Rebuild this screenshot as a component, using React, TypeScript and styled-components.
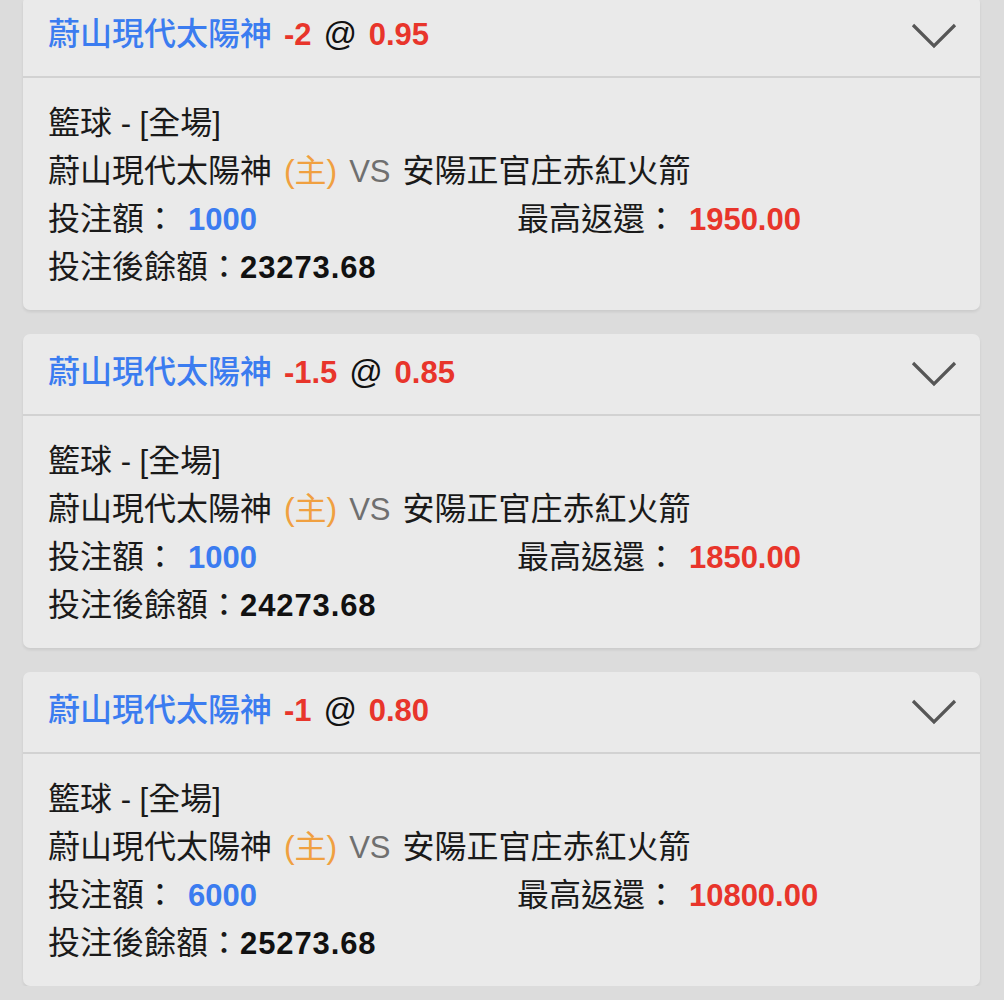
import React from 'react'
import styled, { createGlobalStyle } from 'styled-components'

const GlobalStyle = createGlobalStyle`
  html, body {
    margin: 0;
    padding: 0;
    background: #dcdcdc;
  }
  body {
    font-family: "Liberation Sans", "Noto Sans CJK TC", sans-serif;
    color: #1a1a1a;
  }
`

const StyledList = styled.div`
  display: flex;
  flex-direction: column;
  gap: 24px;
  padding: 0 24px 0 23px;
  margin-top: -4px;
`

const StyledCard = styled.div`
  background: #eaeaea;
  border-radius: 7px;
  box-shadow: 0 2px 3px rgba(0, 0, 0, 0.08);
  overflow: hidden;
`

const StyledHeader = styled.div`
  height: 80px;
  display: flex;
  align-items: center;
  justify-content: space-between;
  padding: 0 23px 0 25px;
  border-bottom: 2px solid #d2d2d2;
`

const StyledTitle = styled.div`
  font-size: 32px;
  line-height: 40px;
  height: 40px;
  font-weight: 700;
  white-space: nowrap;
  word-spacing: 3px;
  margin-top: -4px;
`

const StyledTeam = styled.span`
  color: #3b7cf0;
  font-weight: 500;
`

const StyledRed = styled.span`
  color: #e8352b;
  font-size: 31px;
`

const StyledAt = styled.span`
  color: #111;
  font-weight: 400;
  font-size: 33px;
`

const StyledBody = styled.div`
  padding: 21px 25px 19px;
  display: grid;
  grid-template-columns: 469px 1fr;
  font-size: 32px;
  line-height: 48px;
`

const StyledLine = styled.div<{ $full?: boolean }>`
  grid-column: ${(p) => (p.$full ? '1 / -1' : 'auto')};
  height: 48px;
  white-space: nowrap;
  word-spacing: 3px;
`

const StyledLatin = styled.span`
  font-size: 31px;
  word-spacing: 0;
`

const StyledHome = styled.span`
  color: #f0a040;
`

const StyledVs = styled.span`
  color: #6f6f6f;
  font-size: 31px;
`

const StyledValue = styled.span<{ $color: string; $wide?: boolean }>`
  color: ${(p) => p.$color};
  font-weight: 700;
  font-size: 31px;
  letter-spacing: ${(p) => (p.$wide ? '0.9px' : '0')};
`

const Chevron = () => (
  <svg width="46" height="28" viewBox="0 0 46 28">
    <polyline points="2,3 23,24 44,3" fill="none" stroke="#565656" strokeWidth="3.2" />
  </svg>
)

type Bet = {
  handicap: string
  odds: string
  stake: string
  payout: string
  balance: string
}

const bets: Bet[] = [
  { handicap: '-2', odds: '0.95', stake: '1000', payout: '1950.00', balance: '23273.68' },
  { handicap: '-1.5', odds: '0.85', stake: '1000', payout: '1850.00', balance: '24273.68' },
  { handicap: '-1', odds: '0.80', stake: '6000', payout: '10800.00', balance: '25273.68' },
]

const BetCard = ({ bet }: { bet: Bet }) => (
  <StyledCard>
    <StyledHeader>
      <StyledTitle>
        <StyledTeam>蔚山現代太陽神</StyledTeam> <StyledRed>{bet.handicap}</StyledRed>{' '}
        <StyledAt>@</StyledAt> <StyledRed>{bet.odds}</StyledRed>
      </StyledTitle>
      <Chevron />
    </StyledHeader>
    <StyledBody>
      <StyledLine $full>
        籃球<StyledLatin> - [</StyledLatin>全場<StyledLatin>]</StyledLatin>
      </StyledLine>
      <StyledLine $full>
        蔚山現代太陽神 <StyledHome>(主)</StyledHome> <StyledVs>VS</StyledVs> 安陽正官庄赤紅火箭
      </StyledLine>
      <StyledLine>
        投注額： <StyledValue $color="#3b7cf0">{bet.stake}</StyledValue>
      </StyledLine>
      <StyledLine>
        最高返還： <StyledValue $color="#e8352b">{bet.payout}</StyledValue>
      </StyledLine>
      <StyledLine $full>
        投注後餘額：<StyledValue $color="#111" $wide>{bet.balance}</StyledValue>
      </StyledLine>
    </StyledBody>
  </StyledCard>
)

const App = () => (
  <>
    <GlobalStyle />
    <StyledList>
      {bets.map((b) => (
        <BetCard key={b.odds} bet={b} />
      ))}
    </StyledList>
  </>
)

export default App
